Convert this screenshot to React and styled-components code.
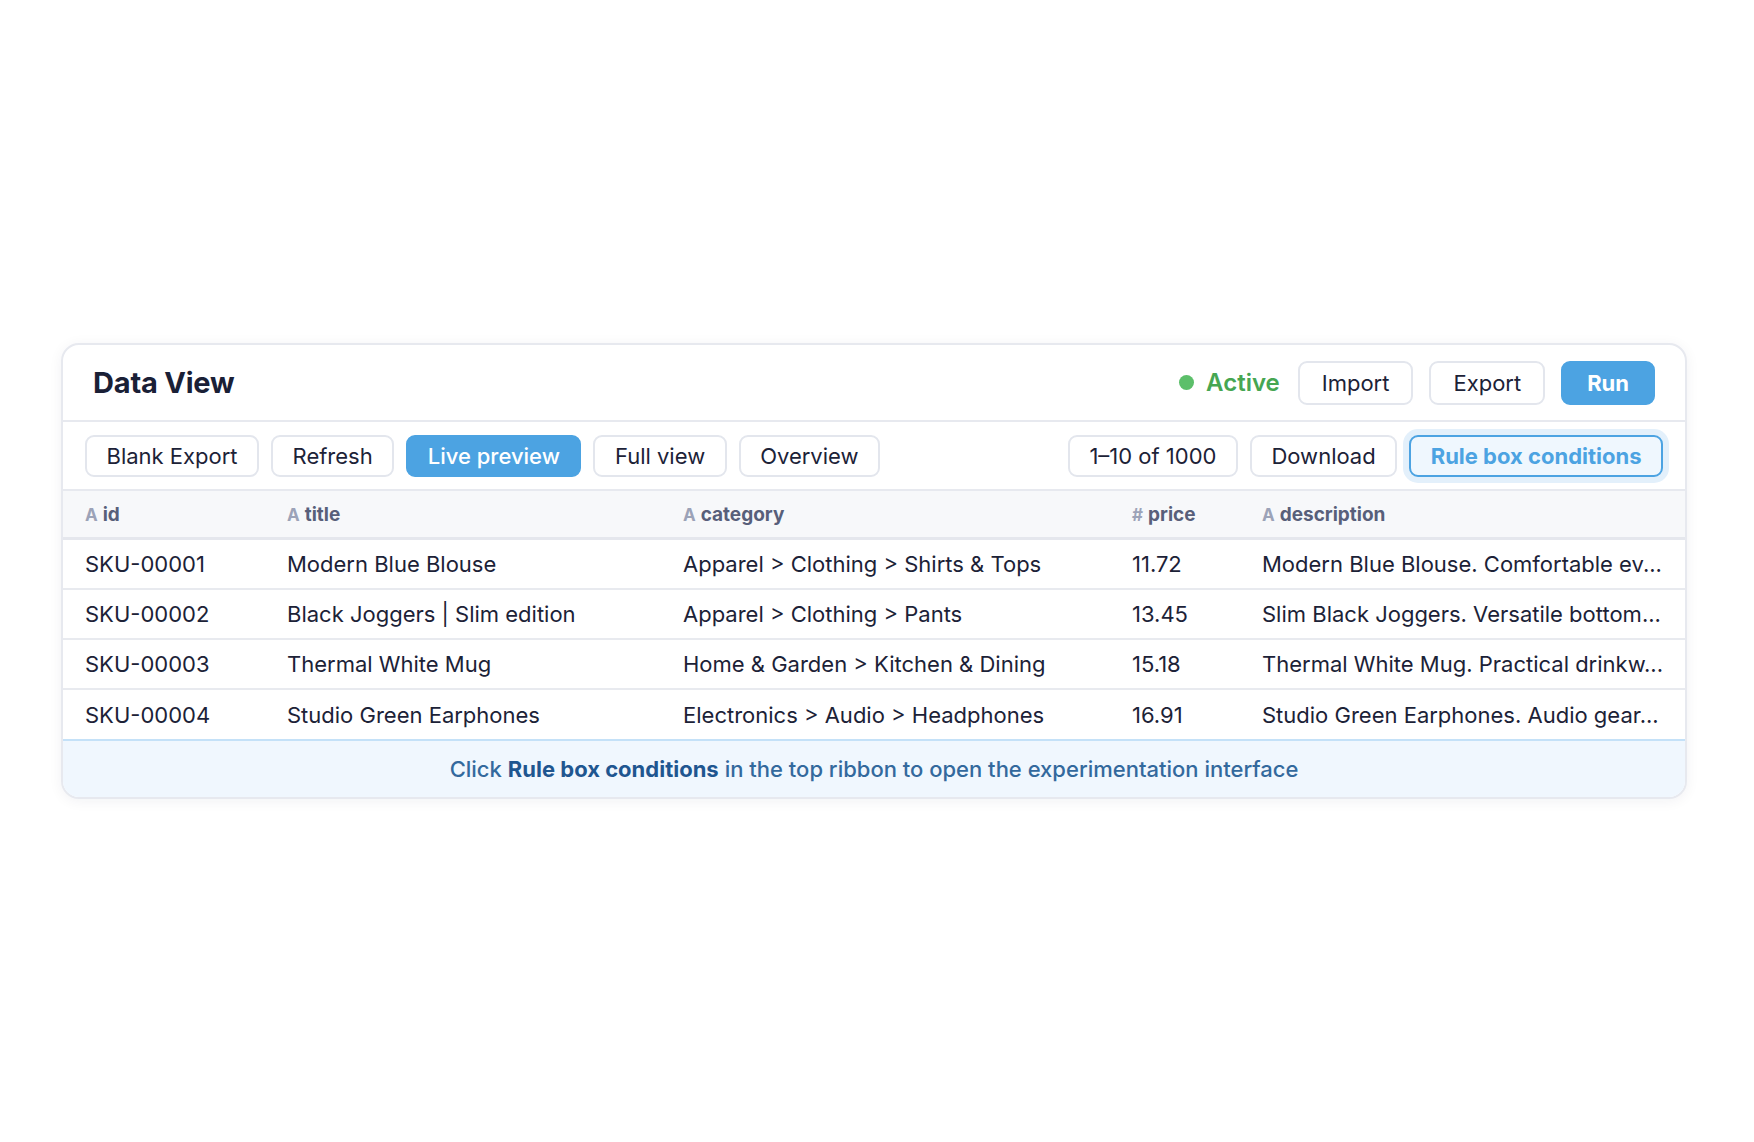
import React from "react";
import styled, { createGlobalStyle } from "styled-components";

const GlobalStyle = createGlobalStyle`
  html, body {
    margin: 0;
    padding: 0;
    background: #ffffff;
  }
  body {
    font-family: Inter, "Noto Sans", sans-serif;
    color: #1c2237;
  }
  * {
    box-sizing: border-box;
  }
`;

const Page = styled.div`
  height: 100vh;
  display: flex;
  align-items: center;
  justify-content: center;
  padding-right: 6px;
`;

const Card = styled.section`
  width: 1626px;
  background: #ffffff;
  border: 2px solid #e7e9ef;
  border-radius: 18px;
  box-shadow: 0 2px 14px rgba(20, 30, 60, 0.06);
  overflow: hidden;
`;

const Header = styled.header`
  height: 77px;
  display: flex;
  align-items: center;
  justify-content: space-between;
  padding: 0 30px;
  border-bottom: 2px solid #e7e9ef;
`;

const Title = styled.h1`
  margin: 0;
  font-size: 29px;
  font-weight: 700;
  color: #1a2036;
  letter-spacing: -0.2px;
`;

const Actions = styled.div`
  display: flex;
  align-items: center;
  gap: ${p => p.$gap || 12}px;
`;

const Status = styled.span`
  display: flex;
  align-items: center;
  gap: 12px;
  margin-right: 2px;
  font-size: 24px;
  font-weight: 600;
  color: #46a652;
`;

const Dot = styled.span`
  width: 15px;
  height: 15px;
  border-radius: 50%;
  background: #5cbf6a;
`;

const Button = styled.button`
  height: ${p => (p.$tall ? 44 : 42)}px;
  padding: 0 ${p => (p.$tall ? 22 : 19.5)}px;
  border: 2px solid #e3e6ed;
  border-radius: 9px;
  background: #ffffff;
  color: #1c2237;
  font-family: inherit;
  font-size: 22px;
  font-weight: 400;
  white-space: nowrap;
  cursor: pointer;

  ${p =>
    p.$variant === "primary" &&
    `
    background: #4ca3e2;
    border-color: #4ca3e2;
    color: #ffffff;
    font-weight: 500;
  `}

  ${p =>
    p.$variant === "run" &&
    `
    background: #4ca3e2;
    border-color: #4ca3e2;
    color: #ffffff;
    font-weight: 700;
    padding: 0 24px;
  `}

  ${p =>
    p.$variant === "focus" &&
    `
    background: #eff7fe;
    border-color: #4ca3e2;
    color: #4ca3e2;
    font-weight: 700;
    box-shadow: 0 0 0 6px #e3f0fb;
  `}
`;

const Toolbar = styled.div`
  height: 69px;
  display: flex;
  align-items: center;
  justify-content: space-between;
  padding: 0 22px;
  border-bottom: 2px solid #e7e9ef;
`;

const columns = "202px 396px 449px 130px 1fr";

const HeadRow = styled.div`
  display: grid;
  grid-template-columns: ${columns};
  height: 49px;
  align-items: center;
  background: #f7f8fa;
  border-bottom: 3px solid #e5e7ed;
`;

const HeadCell = styled.div`
  display: flex;
  align-items: baseline;
  gap: 5px;
  padding: 0 22px;
  font-size: 19px;
  font-weight: 700;
  color: #585f7a;
`;

const TypeMark = styled.span`
  font-size: 17px;
  font-weight: 700;
  color: #9ca3b8;
`;

const Row = styled.div`
  display: grid;
  grid-template-columns: ${columns};
  height: 50px;
  align-items: center;
  border-bottom: 2px solid #e8eaef;

  &:last-child {
    height: 48.5px;
    border-bottom: none;
  }
`;

const Cell = styled.div`
  padding: 0 ${p => (p.$wide ? 10 : 22)}px 0 22px;
  font-size: 22px;
  color: #1c2237;
  white-space: nowrap;
  overflow: hidden;
  text-overflow: ellipsis;
`;

const Footer = styled.footer`
  height: 58px;
  display: flex;
  align-items: center;
  justify-content: center;
  background: #f0f7fe;
  border-top: 2px solid #c4e1f8;
  font-size: 22px;
  font-weight: 500;
  color: #33699d;

  strong {
    margin: 0 6px;
    font-weight: 700;
    color: #1f5690;
  }
`;

const fields = [
  { key: "id", mark: "A" },
  { key: "title", mark: "A" },
  { key: "category", mark: "A" },
  { key: "price", mark: "#" },
  { key: "description", mark: "A" },
];

// descriptions are stored already clipped for the preview grid
const products = [
  {
    id: "SKU-00001",
    title: "Modern Blue Blouse",
    category: "Apparel > Clothing > Shirts & Tops",
    price: "11.72",
    description: "Modern Blue Blouse. Comfortable ev...",
  },
  {
    id: "SKU-00002",
    title: "Black Joggers | Slim edition",
    category: "Apparel > Clothing > Pants",
    price: "13.45",
    description: "Slim Black Joggers. Versatile bottom...",
  },
  {
    id: "SKU-00003",
    title: "Thermal White Mug",
    category: "Home & Garden > Kitchen & Dining",
    price: "15.18",
    description: "Thermal White Mug. Practical drinkw...",
  },
  {
    id: "SKU-00004",
    title: "Studio Green Earphones",
    category: "Electronics > Audio > Headphones",
    price: "16.91",
    description: "Studio Green Earphones. Audio gear...",
  },
];

export default function App() {
  return (
    <Page>
      <GlobalStyle />
      <Card>
        <Header>
          <Title>Data View</Title>
          <Actions $gap={16}>
            <Status>
              <Dot />
              Active
            </Status>
            <Button $tall>Import</Button>
            <Button $tall>Export</Button>
            <Button $tall $variant="run">Run</Button>
          </Actions>
        </Header>

        <Toolbar>
          <Actions>
            <Button>Blank Export</Button>
            <Button>Refresh</Button>
            <Button $variant="primary">Live preview</Button>
            <Button>Full view</Button>
            <Button>Overview</Button>
          </Actions>
          <Actions>
            <Button>1–10 of 1000</Button>
            <Button>Download</Button>
            <Button $variant="focus">Rule box conditions</Button>
          </Actions>
        </Toolbar>

        <HeadRow>
          {fields.map(f => (
            <HeadCell key={f.key}>
              <TypeMark>{f.mark}</TypeMark>
              {f.key}
            </HeadCell>
          ))}
        </HeadRow>

        <div>
          {products.map(p => (
            <Row key={p.id}>
              {fields.map(f => (
                <Cell key={f.key} $wide={f.key === "description"}>
                  {p[f.key]}
                </Cell>
              ))}
            </Row>
          ))}
        </div>

        <Footer>
          Click<strong>Rule box conditions</strong>in the top ribbon to open the experimentation interface
        </Footer>
      </Card>
    </Page>
  );
}
